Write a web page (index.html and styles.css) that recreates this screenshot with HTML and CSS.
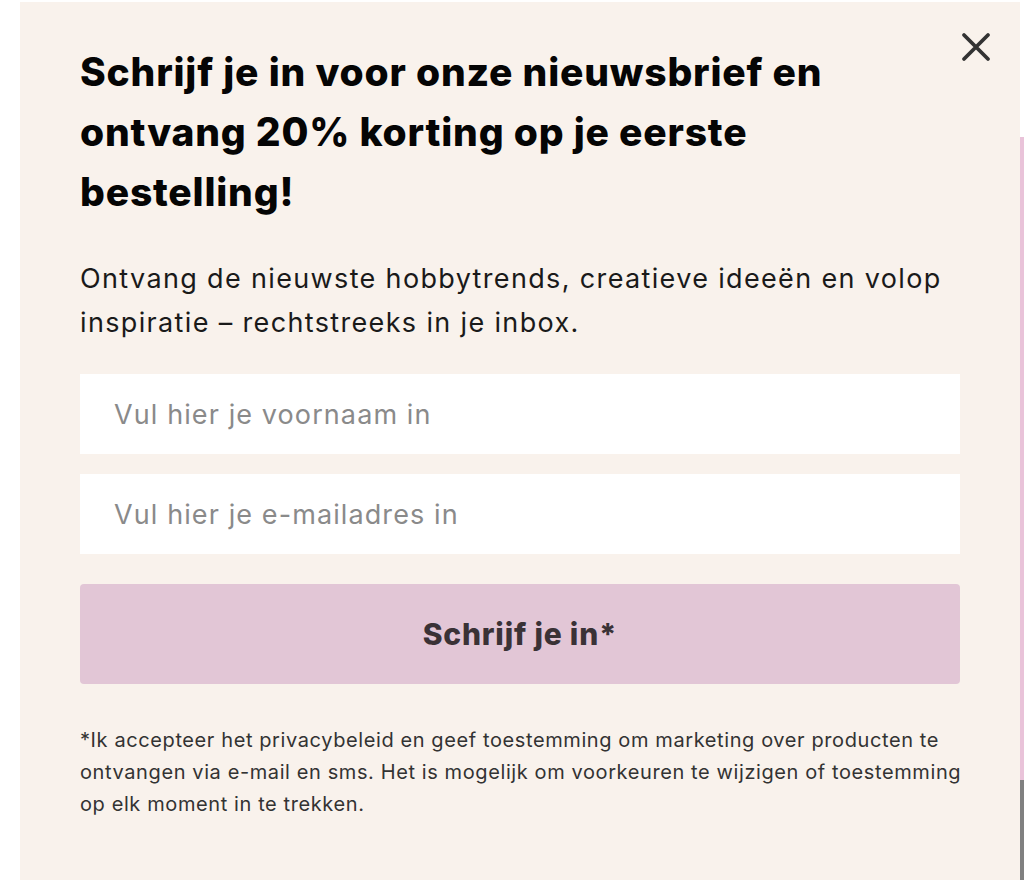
FILE: index.html
```html
<!DOCTYPE html>
<html lang="nl">
<head>
<meta charset="utf-8">
<title>Nieuwsbrief</title>
<link rel="stylesheet" href="styles.css">
</head>
<body>
<div class="page">
  <div class="backdrop">
    <div class="strip-white"></div>
    <div class="strip-pink"></div>
    <div class="strip-gray"></div>
  </div>
  <div class="modal">
    <button class="close" aria-label="Sluiten">
      <svg width="30" height="30" viewBox="0 0 30 30"><path d="M3 3 L27 27 M27 3 L3 27" stroke="#333" stroke-width="3.8" stroke-linecap="round" fill="none"/></svg>
    </button>
    <h1 class="title">Schrijf je in voor onze nieuwsbrief en ontvang 20% korting op je eerste bestelling!</h1>
    <p class="lead">Ontvang de nieuwste hobbytrends, creatieve ideeën en volop inspiratie – rechtstreeks in je inbox.</p>
    <form class="form">
      <input class="field" type="text" placeholder="Vul hier je voornaam in">
      <input class="field" type="email" placeholder="Vul hier je e-mailadres in">
      <button class="submit" type="button">Schrijf je in*</button>
    </form>
    <p class="legal">*Ik accepteer het privacybeleid en geef toestemming om marketing over producten te ontvangen via e-mail en sms. Het is mogelijk om voorkeuren te wijzigen of toestemming op elk moment in te trekken.</p>
  </div>
</div>
</body>
</html>
```

FILE: styles.css
```css
* { box-sizing: border-box; }
html, body { margin: 0; padding: 0; }
body {
  width: 1024px;
  height: 880px;
  overflow: hidden;
  background: #ffffff;
  font-family: "Inter", "Liberation Sans", sans-serif;
}
.page {
  position: relative;
  width: 1024px;
  height: 880px;
}
.backdrop {
  position: absolute;
  top: 0;
  right: 0;
  width: 4px;
  height: 880px;
  display: flex;
  flex-direction: column;
}
.strip-white { height: 137px; background: #ffffff; }
.strip-pink { height: 643px; background: #e9c3d9; }
.strip-gray { flex: 1; background: #808080; }
.modal {
  position: absolute;
  left: 20px;
  top: 2px;
  width: 1000px;
  height: 900px;
  background: #f9f2ec;
  padding: 40px 60px 0 60px;
}
.close {
  position: absolute;
  top: 30px;
  right: 29px;
  width: 30px;
  height: 30px;
  padding: 0;
  border: 0;
  background: transparent;
  display: flex;
}
.title {
  margin: 0;
  width: 800px;
  font-size: 39px;
  line-height: 60px;
  font-weight: 800;
  color: #050505;
  letter-spacing: 0.8px;
}
.lead {
  margin: 35px 0 0;
  font-size: 27px;
  line-height: 44px;
  letter-spacing: 1.35px;
  color: #1a1a1a;
  width: 880px;
}
.form {
  margin-top: 29px;
  width: 880px;
  display: flex;
  flex-direction: column;
  gap: 20px;
}
.field {
  height: 80px;
  border: 0;
  background: #ffffff;
  padding: 0 34px;
  font-family: inherit;
  font-size: 27px;
  letter-spacing: 1.1px;
  color: #333;
  outline: none;
}
.field::placeholder { color: #8a8a8a; }
.submit {
  margin-top: 10px;
  height: 100px;
  border: 0;
  border-radius: 4px;
  background: #e2c6d6;
  color: #3a3236;
  font-family: inherit;
  font-size: 30px;
  font-weight: 800;
  letter-spacing: 0.8px;
}
.legal {
  margin: 40px 0 0;
  width: 892px;
  font-size: 20px;
  line-height: 32px;
  letter-spacing: 0.6px;
  color: #333;
}
```
